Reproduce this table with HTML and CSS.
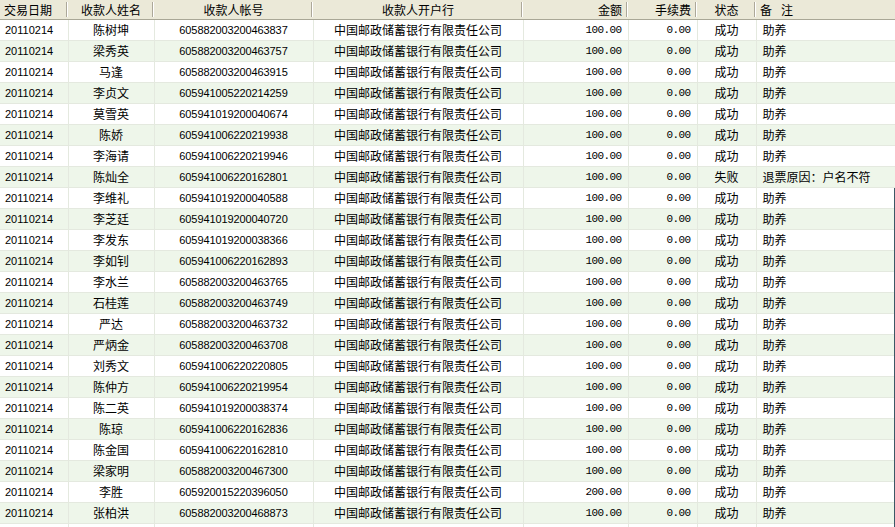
FILE: index.html
```html
<!DOCTYPE html>
<html lang="zh-CN">
<head>
<meta charset="utf-8">
<title>交易明细</title>
<link rel="stylesheet" href="styles.css">
</head>
<body>
<div class="grid">
<table class="list">
<colgroup>
<col class="c-date"><col class="c-name"><col class="c-acct"><col class="c-bank"><col class="c-amt"><col class="c-fee"><col class="c-stat"><col class="c-note">
</colgroup>
<thead>
<tr>
<th class="left">交易日期</th>
<th>收款人姓名</th>
<th>收款人帐号</th>
<th>收款人开户行</th>
<th class="right">金额</th>
<th class="right">手续费</th>
<th>状态</th>
<th class="left"><span>备</span><span class="gap">注</span></th>
</tr>
</thead>
<tbody>
<tr><td class="date">20110214</td><td class="name">陈树坤</td><td class="acct">605882003200463837</td><td class="bank">中国邮政储蓄银行有限责任公司</td><td class="num">100.00</td><td class="num">0.00</td><td class="stat">成功</td><td class="note">助养</td></tr>
<tr><td class="date">20110214</td><td class="name">梁秀英</td><td class="acct">605882003200463757</td><td class="bank">中国邮政储蓄银行有限责任公司</td><td class="num">100.00</td><td class="num">0.00</td><td class="stat">成功</td><td class="note">助养</td></tr>
<tr><td class="date">20110214</td><td class="name">马逢</td><td class="acct">605882003200463915</td><td class="bank">中国邮政储蓄银行有限责任公司</td><td class="num">100.00</td><td class="num">0.00</td><td class="stat">成功</td><td class="note">助养</td></tr>
<tr><td class="date">20110214</td><td class="name">李贞文</td><td class="acct">605941005220214259</td><td class="bank">中国邮政储蓄银行有限责任公司</td><td class="num">100.00</td><td class="num">0.00</td><td class="stat">成功</td><td class="note">助养</td></tr>
<tr><td class="date">20110214</td><td class="name">莫雪英</td><td class="acct">605941019200040674</td><td class="bank">中国邮政储蓄银行有限责任公司</td><td class="num">100.00</td><td class="num">0.00</td><td class="stat">成功</td><td class="note">助养</td></tr>
<tr><td class="date">20110214</td><td class="name">陈娇</td><td class="acct">605941006220219938</td><td class="bank">中国邮政储蓄银行有限责任公司</td><td class="num">100.00</td><td class="num">0.00</td><td class="stat">成功</td><td class="note">助养</td></tr>
<tr><td class="date">20110214</td><td class="name">李海请</td><td class="acct">605941006220219946</td><td class="bank">中国邮政储蓄银行有限责任公司</td><td class="num">100.00</td><td class="num">0.00</td><td class="stat">成功</td><td class="note">助养</td></tr>
<tr><td class="date">20110214</td><td class="name">陈灿全</td><td class="acct">605941006220162801</td><td class="bank">中国邮政储蓄银行有限责任公司</td><td class="num">100.00</td><td class="num">0.00</td><td class="stat">失败</td><td class="note">退票原因：户名不符</td></tr>
<tr><td class="date">20110214</td><td class="name">李维礼</td><td class="acct">605941019200040588</td><td class="bank">中国邮政储蓄银行有限责任公司</td><td class="num">100.00</td><td class="num">0.00</td><td class="stat">成功</td><td class="note">助养</td></tr>
<tr><td class="date">20110214</td><td class="name">李芝廷</td><td class="acct">605941019200040720</td><td class="bank">中国邮政储蓄银行有限责任公司</td><td class="num">100.00</td><td class="num">0.00</td><td class="stat">成功</td><td class="note">助养</td></tr>
<tr><td class="date">20110214</td><td class="name">李发东</td><td class="acct">605941019200038366</td><td class="bank">中国邮政储蓄银行有限责任公司</td><td class="num">100.00</td><td class="num">0.00</td><td class="stat">成功</td><td class="note">助养</td></tr>
<tr><td class="date">20110214</td><td class="name">李如钊</td><td class="acct">605941006220162893</td><td class="bank">中国邮政储蓄银行有限责任公司</td><td class="num">100.00</td><td class="num">0.00</td><td class="stat">成功</td><td class="note">助养</td></tr>
<tr><td class="date">20110214</td><td class="name">李水兰</td><td class="acct">605882003200463765</td><td class="bank">中国邮政储蓄银行有限责任公司</td><td class="num">100.00</td><td class="num">0.00</td><td class="stat">成功</td><td class="note">助养</td></tr>
<tr><td class="date">20110214</td><td class="name">石桂莲</td><td class="acct">605882003200463749</td><td class="bank">中国邮政储蓄银行有限责任公司</td><td class="num">100.00</td><td class="num">0.00</td><td class="stat">成功</td><td class="note">助养</td></tr>
<tr><td class="date">20110214</td><td class="name">严达</td><td class="acct">605882003200463732</td><td class="bank">中国邮政储蓄银行有限责任公司</td><td class="num">100.00</td><td class="num">0.00</td><td class="stat">成功</td><td class="note">助养</td></tr>
<tr><td class="date">20110214</td><td class="name">严炳金</td><td class="acct">605882003200463708</td><td class="bank">中国邮政储蓄银行有限责任公司</td><td class="num">100.00</td><td class="num">0.00</td><td class="stat">成功</td><td class="note">助养</td></tr>
<tr><td class="date">20110214</td><td class="name">刘秀文</td><td class="acct">605941006220220805</td><td class="bank">中国邮政储蓄银行有限责任公司</td><td class="num">100.00</td><td class="num">0.00</td><td class="stat">成功</td><td class="note">助养</td></tr>
<tr><td class="date">20110214</td><td class="name">陈仲方</td><td class="acct">605941006220219954</td><td class="bank">中国邮政储蓄银行有限责任公司</td><td class="num">100.00</td><td class="num">0.00</td><td class="stat">成功</td><td class="note">助养</td></tr>
<tr><td class="date">20110214</td><td class="name">陈二英</td><td class="acct">605941019200038374</td><td class="bank">中国邮政储蓄银行有限责任公司</td><td class="num">100.00</td><td class="num">0.00</td><td class="stat">成功</td><td class="note">助养</td></tr>
<tr><td class="date">20110214</td><td class="name">陈琼</td><td class="acct">605941006220162836</td><td class="bank">中国邮政储蓄银行有限责任公司</td><td class="num">100.00</td><td class="num">0.00</td><td class="stat">成功</td><td class="note">助养</td></tr>
<tr><td class="date">20110214</td><td class="name">陈金国</td><td class="acct">605941006220162810</td><td class="bank">中国邮政储蓄银行有限责任公司</td><td class="num">100.00</td><td class="num">0.00</td><td class="stat">成功</td><td class="note">助养</td></tr>
<tr><td class="date">20110214</td><td class="name">梁家明</td><td class="acct">605882003200467300</td><td class="bank">中国邮政储蓄银行有限责任公司</td><td class="num">100.00</td><td class="num">0.00</td><td class="stat">成功</td><td class="note">助养</td></tr>
<tr><td class="date">20110214</td><td class="name">李胜</td><td class="acct">605920015220396050</td><td class="bank">中国邮政储蓄银行有限责任公司</td><td class="num">200.00</td><td class="num">0.00</td><td class="stat">成功</td><td class="note">助养</td></tr>
<tr><td class="date">20110214</td><td class="name">张柏洪</td><td class="acct">605882003200468873</td><td class="bank">中国邮政储蓄银行有限责任公司</td><td class="num">100.00</td><td class="num">0.00</td><td class="stat">成功</td><td class="note">助养</td></tr>
<tr class="tail"><td></td><td></td><td></td><td></td><td></td><td></td><td></td><td></td></tr>
</tbody>
</table>
<div class="edge"></div>
</div>
</body>
</html>
```

FILE: styles.css
```css
html, body {
  margin: 0;
  padding: 0;
  background: #ffffff;
}

body {
  width: 895px;
  height: 527px;
  overflow: hidden;
  font-family: "Noto Sans CJK SC", "Liberation Sans", sans-serif;
  font-size: 12px;
  color: #000000;
}

.grid {
  position: relative;
  width: 895px;
  height: 527px;
  overflow: hidden;
}

.list {
  width: 895px;
  table-layout: fixed;
  border-collapse: collapse;
  border-spacing: 0;
}

.c-date { width: 68px; }
.c-name { width: 86px; }
.c-acct { width: 159px; }
.c-bank { width: 210px; }
.c-amt  { width: 105px; }
.c-fee  { width: 69px; }
.c-stat { width: 59px; }
.c-note { width: 139px; }

.list th {
  height: 19px;
  padding: 0 6px;
  font-weight: normal;
  font-size: 12px;
  line-height: 18px;
  text-align: center;
  white-space: nowrap;
  border-bottom: 1px solid #a9a796;
  background:
    linear-gradient(#aca899, #aca899) no-repeat right 1px top 2px / 1px 15px,
    linear-gradient(#ffffff, #ffffff) no-repeat right 0 top 2px / 1px 15px,
    #ebe9d8;
}

.list th:last-child {
  background: #ebe9d8;
}

.list th.left { text-align: left; padding-left: 4px; }
.list th.right { text-align: right; }
.list th .gap { margin-left: 9px; }

.list td {
  height: 20px;
  padding: 0 6px;
  line-height: 20px;
  white-space: nowrap;
  overflow: hidden;
  border-bottom: 1px solid #e4e9df;
  border-right: 1px solid #e4e9df;
  vertical-align: middle;
}

.list tbody tr:nth-child(even) td {
  background: #eef6ea;
}

.list td.date {
  padding-left: 5px;
  font-family: "Liberation Sans", sans-serif;
  font-size: 11px;
}

.list td.name,
.list td.bank,
.list td.stat {
  text-align: center;
}

.list td.acct {
  text-align: center;
  font-family: "Liberation Sans", sans-serif;
  font-size: 11px;
  letter-spacing: -0.1px;
}

.list td.num {
  text-align: right;
  font-family: "Liberation Mono", monospace;
  font-size: 11px;
  letter-spacing: -0.6px;
  padding-right: 6px;
}

.list td.note {
  text-align: left;
}

.list tr.tail td {
  border-bottom: none;
}

.edge {
  position: absolute;
  right: 0;
  top: 188px;
  bottom: 0;
  width: 1px;
  background: #3b5866;
}
```
